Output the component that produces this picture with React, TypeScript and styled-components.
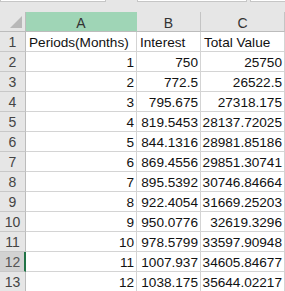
import styled, { createGlobalStyle } from 'styled-components';

const rows: [number, string, string][] = [
  [1, '750', '25750'],
  [2, '772.5', '26522.5'],
  [3, '795.675', '27318.175'],
  [4, '819.5453', '28137.72025'],
  [5, '844.1316', '28981.85186'],
  [6, '869.4556', '29851.30741'],
  [7, '895.5392', '30746.84664'],
  [8, '922.4054', '31669.25203'],
  [9, '950.0776', '32619.3296'],
  [10, '978.5799', '33597.90948'],
  [11, '1007.937', '34605.84677'],
  [12, '1038.175', '35644.02217'],
];

const GlobalStyle = createGlobalStyle`
  html, body {
    margin: 0;
    padding: 0;
    background: #fff;
    overflow: hidden;
  }
  body {
    font-family: "Liberation Sans", Arial, sans-serif;
  }
`;

const Page = styled.div`
  width: 285px;
  height: 291px;
  overflow: hidden;
  background: #e6e6e6;
`;

const TopStrip = styled.div`
  height: 12px;
  display: flex;
  align-items: flex-start;
  background: #e6e6e6;
`;

const Field = styled.div<{ $w: number; $ml: number }>`
  width: ${p => p.$w}px;
  margin-left: ${p => p.$ml}px;
  height: 1px;
  background: #fff;
  border: 1px solid #c6c6c6;
  border-top: none;
  flex-shrink: 0;
`;

const Sheet = styled.div`
  display: grid;
  grid-template-columns: 26px 111px 64px 84px;
  grid-auto-rows: 20px;
`;

const Corner = styled.div`
  position: relative;
  background: #e6e6e6;
  border-right: 1px solid #bcbcbc;
  border-bottom: 1px solid #bcbcbc;
  &::after {
    content: '';
    position: absolute;
    right: 3px;
    bottom: 3px;
    width: 0;
    height: 0;
    border-left: 12px solid transparent;
    border-bottom: 12px solid #b8b8b8;
  }
`;

const ColHead = styled.div<{ $active?: boolean }>`
  background: ${p => (p.$active ? '#9fd5b6' : '#e6e6e6')};
  border-right: 1px solid ${p => (p.$active ? '#9fd5b6' : '#c4c4c4')};
  border-bottom: 1px solid #bcbcbc;
  display: flex;
  align-items: center;
  justify-content: center;
  font-size: 14px;
  color: #333;
  padding-top: 2px;
`;

const RowHead = styled.div<{ $active?: boolean }>`
  background: ${p => (p.$active ? '#d2d2d2' : '#e6e6e6')};
  border-right: ${p => (p.$active ? '2px solid #217346' : '1px solid #bcbcbc')};
  border-bottom: 1px solid #c8c8c8;
  display: flex;
  align-items: flex-end;
  justify-content: center;
  padding-bottom: 1px;
  padding-left: ${p => (p.$active ? '1px' : '0')};
  font-size: 14px;
  color: ${p => (p.$active ? '#555' : '#444')};
  box-sizing: border-box;
`;

const Cell = styled.div<{ $num?: boolean }>`
  background: #fff;
  border-right: 1px solid #d4d4d4;
  border-bottom: 1px solid #d4d4d4;
  display: flex;
  align-items: flex-end;
  justify-content: ${p => (p.$num ? 'flex-end' : 'flex-start')};
  padding: 0 2px 1px 3px;
  font-size: 13.6px;
  color: #111;
  white-space: nowrap;
  overflow: visible;
`;

export default function App() {
  return (
    <>
      <GlobalStyle />
      <Page>
        <TopStrip>
          <Field $w={104} $ml={0} />
          <Field $w={108} $ml={31} />
          <Field $w={40} $ml={3} />
        </TopStrip>
        <Sheet>
          <Corner />
          <ColHead $active>A</ColHead>
          <ColHead>B</ColHead>
          <ColHead>C</ColHead>

          <RowHead>1</RowHead>
          <Cell>Periods(Months)</Cell>
          <Cell>Interest</Cell>
          <Cell>Total Value</Cell>

          {rows.map(([n, interest, total]) => (
            <Row key={n} n={n} interest={interest} total={total} />
          ))}
        </Sheet>
      </Page>
    </>
  );
}

function Row({ n, interest, total }: { n: number; interest: string; total: string }) {
  return (
    <>
      <RowHead $active={n + 1 === 12}>{n + 1}</RowHead>
      <Cell $num>{n}</Cell>
      <Cell $num>{interest}</Cell>
      <Cell $num>{total}</Cell>
    </>
  );
}
